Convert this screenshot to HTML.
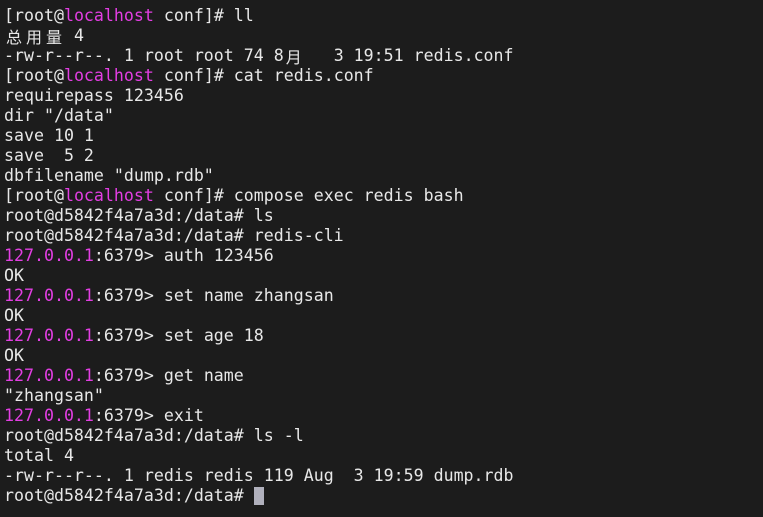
<!DOCTYPE html>
<html><head><meta charset="utf-8"><style>
html,body{margin:0;padding:0;background:#1c1c1c;width:763px;height:517px;overflow:hidden}
pre{margin:0;padding:6px 0 0 4px;font-family:"DejaVu Sans Mono",monospace;font-size:16.6px;line-height:20px;color:#e8e8e8}
.m{color:#e23ee2}
.c{display:inline-block;width:20px;height:20px;line-height:20px;vertical-align:top;overflow:hidden;text-align:center;font-family:"Noto Sans CJK SC",sans-serif;font-size:16px}
.cur{display:inline-block;width:10px;height:18px;background:#b0b0bc;vertical-align:-4px}
</style></head><body><pre>[root@<span class="m">localhost</span> conf]# ll
<span class="c">总</span><span class="c">用</span><span class="c">量</span> 4
-rw-r--r--. 1 root root 74 8<span class="c">月</span>   3 19:51 redis.conf
[root@<span class="m">localhost</span> conf]# cat redis.conf
requirepass 123456
dir "/data"
save 10 1
save  5 2
dbfilename "dump.rdb"
[root@<span class="m">localhost</span> conf]# compose exec redis bash
root@d5842f4a7a3d:/data# ls
root@d5842f4a7a3d:/data# redis-cli
<span class="m">127.0.0.1</span>:6379&gt; auth 123456
OK
<span class="m">127.0.0.1</span>:6379&gt; set name zhangsan
OK
<span class="m">127.0.0.1</span>:6379&gt; set age 18
OK
<span class="m">127.0.0.1</span>:6379&gt; get name
"zhangsan"
<span class="m">127.0.0.1</span>:6379&gt; exit
root@d5842f4a7a3d:/data# ls -l
total 4
-rw-r--r--. 1 redis redis 119 Aug  3 19:59 dump.rdb
root@d5842f4a7a3d:/data# <span class="cur"></span></pre></body></html>
